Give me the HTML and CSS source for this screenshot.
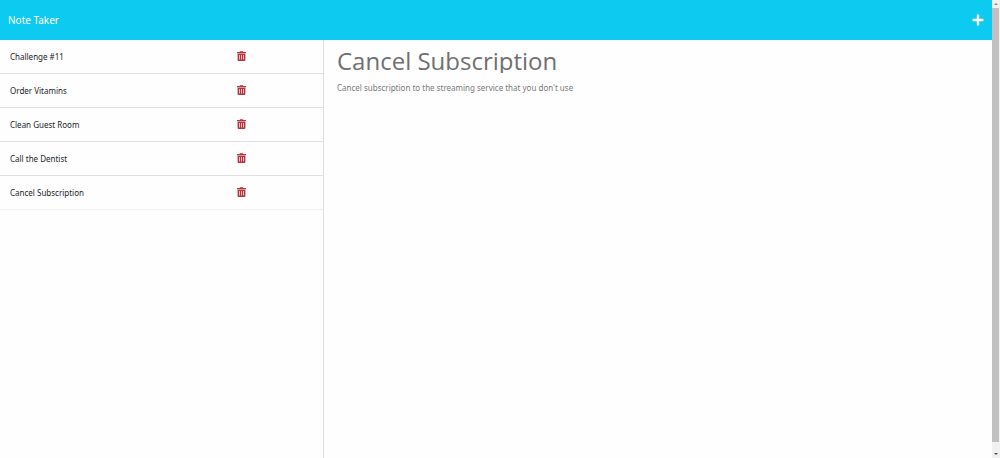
FILE: index.html
```html
<!DOCTYPE html>
<html lang="en">
<head>
<meta charset="utf-8">
<title>Note Taker</title>
<meta name="viewport" content="width=device-width, initial-scale=1">
<link rel="stylesheet" href="styles.css">
</head>
<body>
<svg class="sprite" aria-hidden="true">
  <symbol id="trash" viewBox="0 0 9 10">
    <path fill-rule="evenodd" d="M0 1h2.600l.5-.8h2.800l.5.8H9v1.200H0zM.6 2.800h7.800v6.200a1 1 0 0 1-1 1H1.600a1 1 0 0 1-1-1zM2.200 4v4.600h.7V4zm2 0v4.600h.7V4zm2 0v4.600h.7V4z"/>
  </symbol>
</svg>
<div class="window">
  <div class="app">
    <header class="navbar">
      <a class="brand" href="#">Note Taker</a>
      <button class="new-note" type="button" aria-label="New note">
        <svg viewBox="0 0 12 12"><path d="M4.800.6h2.400v4.200h4.200v2.400H7.200v4.200H4.800V7.200H.6V4.800h4.200z"/></svg>
      </button>
    </header>
    <main class="content">
      <nav class="sidebar" aria-label="Notes">
        <ul class="notes">
          <li class="note"><a class="note-title" href="#">Challenge #11</a><button class="delete" type="button" aria-label="Delete Challenge #11"><svg><use href="#trash"/></svg></button></li>
          <li class="note"><a class="note-title" href="#">Order Vitamins</a><button class="delete" type="button" aria-label="Delete Order Vitamins"><svg><use href="#trash"/></svg></button></li>
          <li class="note"><a class="note-title" href="#">Clean Guest Room</a><button class="delete" type="button" aria-label="Delete Clean Guest Room"><svg><use href="#trash"/></svg></button></li>
          <li class="note"><a class="note-title" href="#">Call the Dentist</a><button class="delete" type="button" aria-label="Delete Call the Dentist"><svg><use href="#trash"/></svg></button></li>
          <li class="note"><a class="note-title" href="#">Cancel Subscription</a><button class="delete" type="button" aria-label="Delete Cancel Subscription"><svg><use href="#trash"/></svg></button></li>
        </ul>
      </nav>
      <section class="editor">
        <input class="title-field" type="text" aria-label="Note title" value="Cancel Subscription" readonly>
        <textarea class="text-field" aria-label="Note text" readonly>Cancel subscription to the streaming service that you don't use</textarea>
      </section>
    </main>
  </div>
  <div class="scrollbar" aria-hidden="true">
    <svg class="arrow" viewBox="0 0 8 8"><path d="M2 5l2-2 2 2z"/></svg>
    <div class="thumb"></div>
    <svg class="arrow arrow-down" viewBox="0 0 8 8"><path d="M2 3l2 2 2-2z"/></svg>
  </div>
</div>
</body>
</html>
```
FILE: styles.css
```css
* {
  box-sizing: border-box;
}

body {
  margin: 0;
  background: #fefefe;
  color: #212529;
  font: 8px/12px "Noto Sans", "Open Sans", sans-serif;
}

button,
input,
textarea {
  margin: 0;
  padding: 0;
  border: 0;
  background: none;
  font: inherit;
}

button {
  cursor: pointer;
}

.sprite {
  display: none;
}

.window {
  display: flex;
  height: 100vh;
}

.app {
  display: flex;
  flex: 1;
  flex-direction: column;
  min-width: 0;
}

.navbar {
  display: flex;
  align-items: center;
  justify-content: space-between;
  padding: 10px 8px;
  background: #0dcaf0;
}

.brand {
  color: #fff;
  font-size: 10px;
  line-height: 20px;
  text-decoration: none;
}

.new-note {
  display: flex;
  color: #fff;
}

.new-note svg {
  width: 12px;
  height: 12px;
  fill: currentColor;
}

.content {
  display: flex;
  flex: 1;
}

.sidebar {
  width: 32.66%;
  border-right: 1px solid #dcdee2;
}

.notes {
  margin: 0;
  padding: 0;
  list-style: none;
}

.note {
  display: grid;
  grid-template-columns: 3fr 1fr;
  align-items: center;
  height: 34px;
  padding: 0 10px;
  border-bottom: 1px solid #e0e1e3;
}

.note:last-child {
  border-bottom-color: #eeeff0;
}

.note-title {
  color: inherit;
  text-decoration: none;
}

.delete {
  display: flex;
  justify-self: start;
  padding-bottom: 1px;
  color: #b5343f;
}

.delete svg {
  width: 9px;
  height: 10px;
  fill: currentColor;
}

.editor {
  display: flex;
  flex: 1;
  flex-direction: column;
  gap: 9px;
  padding: 8px 13px;
}

.title-field {
  height: 25px;
  overflow: clip;
  color: #707070;
  font-family: "Open Sans", "Noto Sans", sans-serif;
  font-size: 24px;
  line-height: 24px;
}

.text-field {
  flex: 1;
  color: #7a7a7a;
  resize: none;
}

.scrollbar {
  display: flex;
  flex-direction: column;
  width: 8px;
  background: #f1f1f1;
}

.thumb {
  flex: 1;
  margin: 0 1px 8px 0;
  background: #c1c1c1;
}

.arrow {
  width: 8px;
  height: 8px;
  fill: #8a8a8a;
}

.arrow-down {
  fill: #505050;
}
```
